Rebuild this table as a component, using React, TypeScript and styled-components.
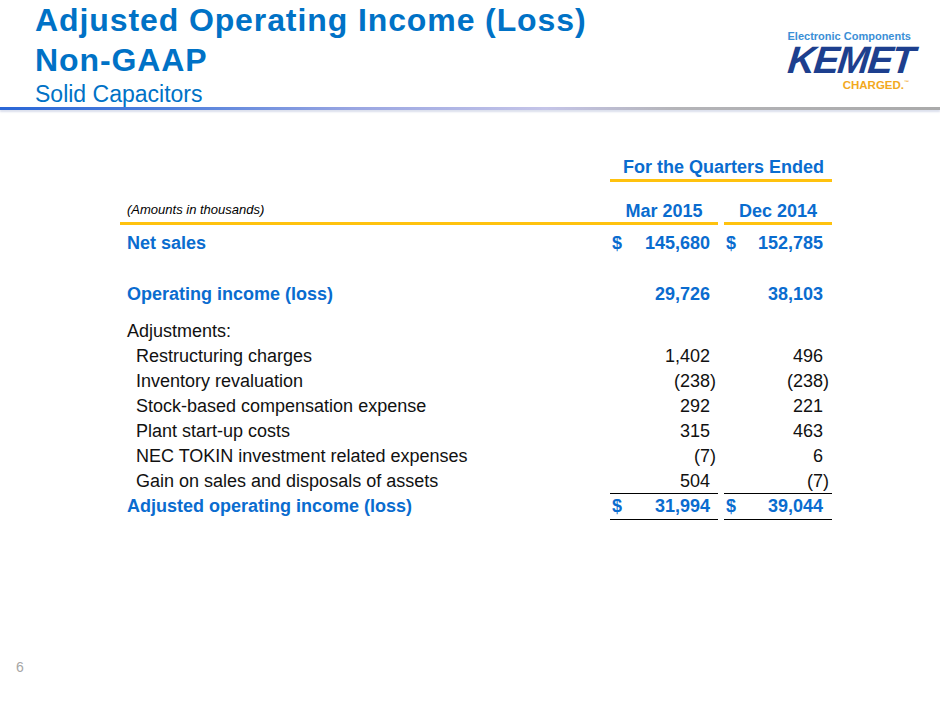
import styled, { createGlobalStyle } from 'styled-components';

const GlobalStyle = createGlobalStyle`
  html, body {
    margin: 0;
    padding: 0;
    background: #ffffff;
  }
  body {
    font-family: "Liberation Sans", Arial, sans-serif;
  }
`;

type Row = {
  label: string;
  kind: 'main' | 'plain' | 'sub' | 'total';
  a?: string;
  b?: string;
  dollar?: boolean;
  top: number;
};

const rows: Row[] = [
  { label: 'Net sales', kind: 'main', a: '145,680', b: '152,785', dollar: true, top: 6 },
  { label: 'Operating income (loss)', kind: 'main', a: '29,726', b: '38,103', top: 26 },
  { label: 'Adjustments:', kind: 'plain', top: 12 },
  { label: 'Restructuring charges', kind: 'sub', a: '1,402', b: '496', top: 0 },
  { label: 'Inventory revaluation', kind: 'sub', a: '(238)', b: '(238)', top: 0 },
  { label: 'Stock-based compensation expense', kind: 'sub', a: '292', b: '221', top: 0 },
  { label: 'Plant start-up costs', kind: 'sub', a: '315', b: '463', top: 0 },
  { label: 'NEC TOKIN investment related expenses', kind: 'sub', a: '(7)', b: '6', top: 0 },
  { label: 'Gain on sales and disposals of assets', kind: 'sub', a: '504', b: '(7)', top: 0 },
  { label: 'Adjusted operating income (loss)', kind: 'total', a: '31,994', b: '39,044', dollar: true, top: 0 },
];

const Slide = () => {
  return (
    <Page>
      <GlobalStyle />
      <Header>
        <TitleBlock>
          <Title>
            Adjusted Operating Income (Loss)
            <br />
            Non-GAAP
          </Title>
          <Subtitle>Solid Capacitors</Subtitle>
        </TitleBlock>
        <Logo>
          <LogoTag>Electronic Components</LogoTag>
          <LogoMark>KEMET</LogoMark>
          <LogoCharged>
            CHARGED.<sup>™</sup>
          </LogoCharged>
        </Logo>
      </Header>
      <Rule />

      <Table>
        <GroupRow>
          <span />
          <GroupHead>For the Quarters Ended</GroupHead>
        </GroupRow>
        <HeadRow>
          <Amounts>(Amounts in thousands)</Amounts>
          <ColHead>Mar 2015</ColHead>
          <ColHead $second>Dec 2014</ColHead>
        </HeadRow>
        {rows.map((r) => (
          <BodyRow key={r.label} $top={r.top} $kind={r.kind}>
            <Label $kind={r.kind}>{r.label}</Label>
            <Value $kind={r.kind}>
              <span>{r.dollar ? '$' : ''}</span>
              <Num $neg={!!r.a && r.a.startsWith('(')}>{r.a}</Num>
            </Value>
            <Value $kind={r.kind} $second>
              <span>{r.dollar ? '$' : ''}</span>
              <Num $neg={!!r.b && r.b.startsWith('(')}>{r.b}</Num>
            </Value>
          </BodyRow>
        ))}
      </Table>

      <PageNo>6</PageNo>
    </Page>
  );
};

const Page = styled.div`
  width: 940px;
  height: 705px;
  display: flex;
  flex-direction: column;
  overflow: hidden;
`;

const Header = styled.header`
  display: flex;
  justify-content: space-between;
  align-items: flex-start;
  padding: 0 27px 0 35px;
`;

const TitleBlock = styled.div`
  display: flex;
  flex-direction: column;
`;

const Title = styled.h1`
  margin: 0;
  font-size: 32px;
  line-height: 40px;
  font-weight: 700;
  letter-spacing: 0.9px;
  color: #0072c6;
`;

const Subtitle = styled.div`
  margin-top: 2px;
  font-size: 23px;
  line-height: 24px;
  color: #0072c6;
`;

const Logo = styled.div`
  margin-top: 30px;
  display: flex;
  flex-direction: column;
  align-items: flex-end;
`;

const LogoTag = styled.div`
  font-size: 11px;
  line-height: 13px;
  font-weight: 700;
  color: #3b8fd6;
  margin-right: 2px;
`;

const LogoMark = styled.div`
  margin-top: 1px;
  font-size: 38px;
  line-height: 33px;
  font-weight: 700;
  font-style: italic;
  letter-spacing: -1.5px;
  color: #1d3f8e;
  transform: skewX(-6deg);
`;

const LogoCharged = styled.div`
  margin-top: 2px;
  margin-right: 4px;
  font-size: 11.5px;
  line-height: 13px;
  font-weight: 700;
  color: #f2a91e;

  sup {
    font-size: 5px;
    vertical-align: top;
    line-height: 7px;
  }
`;

const Rule = styled.div`
  height: 3px;
  margin-top: 1px;
  background: linear-gradient(
    to right,
    #2a66d6 0%,
    #4f7fdc 18%,
    #9aa6e2 38%,
    #c4c4e8 58%,
    #b4b4b8 72%,
    #aaaaaa 100%
  );
  box-shadow: 0 2px 2px rgba(150, 160, 200, 0.35);
`;

const Table = styled.div`
  margin: 47px 0 0 120px;
  width: 712px;
  display: flex;
  flex-direction: column;
  color: #000000;
`;

const GridRow = styled.div`
  display: grid;
  grid-template-columns: 490px 108px 114px;
`;

const GroupRow = styled(GridRow)``;

const GroupHead = styled.div`
  grid-column: 2 / 4;
  text-align: right;
  padding: 0 8px 2px 0;
  font-size: 18px;
  line-height: 20px;
  font-weight: 700;
  color: #0a6ccf;
  border-bottom: 3px solid #ffc20e;
`;

const HeadRow = styled(GridRow)`
  align-items: end;
`;

const Amounts = styled.div`
  padding: 0 0 3px 7px;
  font-size: 13px;
  line-height: 18px;
  font-style: italic;
  border-bottom: 3px solid #ffc20e;
`;

const ColHead = styled.div<{ $second?: boolean }>`
  margin-left: ${(p) => (p.$second ? '6px' : '0')};
  padding: 19px 0 1px;
  text-align: center;
  font-size: 18px;
  line-height: 20px;
  font-weight: 700;
  color: #0a6ccf;
  border-bottom: 3px solid #ffc20e;
`;

type Kind = Row['kind'];

const BodyRow = styled(GridRow)<{ $top: number; $kind: Kind }>`
  margin-top: ${(p) => p.$top}px;
  font-size: 18px;
  line-height: 25px;
`;

const Label = styled.div<{ $kind: Kind }>`
  padding-left: ${(p) => (p.$kind === 'sub' ? '16px' : '7px')};
  font-weight: ${(p) => (p.$kind === 'main' || p.$kind === 'total' ? 700 : 400)};
  color: ${(p) => (p.$kind === 'main' || p.$kind === 'total' ? '#0a6ccf' : '#111111')};
`;

const Value = styled.div<{ $kind: Kind; $second?: boolean }>`
  margin-left: ${(p) => (p.$second ? '6px' : '0')};
  display: flex;
  justify-content: space-between;
  padding: 0 ${(p) => (p.$second ? '9px' : '8px')} 0 2px;
  font-weight: ${(p) => (p.$kind === 'main' || p.$kind === 'total' ? 700 : 400)};
  color: ${(p) => (p.$kind === 'main' || p.$kind === 'total' ? '#0a6ccf' : '#111111')};
  border-top: ${(p) => (p.$kind === 'total' ? '1px solid #000' : 'none')};
  border-bottom: ${(p) => (p.$kind === 'total' ? '1px solid #000' : 'none')};
  margin-top: ${(p) => (p.$kind === 'total' ? '-1px' : '0')};
`;

const Num = styled.span<{ $neg: boolean }>`
  margin-right: ${(p) => (p.$neg ? '-6px' : '0')};
`;

const PageNo = styled.div`
  margin-top: auto;
  padding: 0 0 30px 16px;
  font-size: 14px;
  line-height: 16px;
  color: #a6a6a6;
`;

export default Slide;
